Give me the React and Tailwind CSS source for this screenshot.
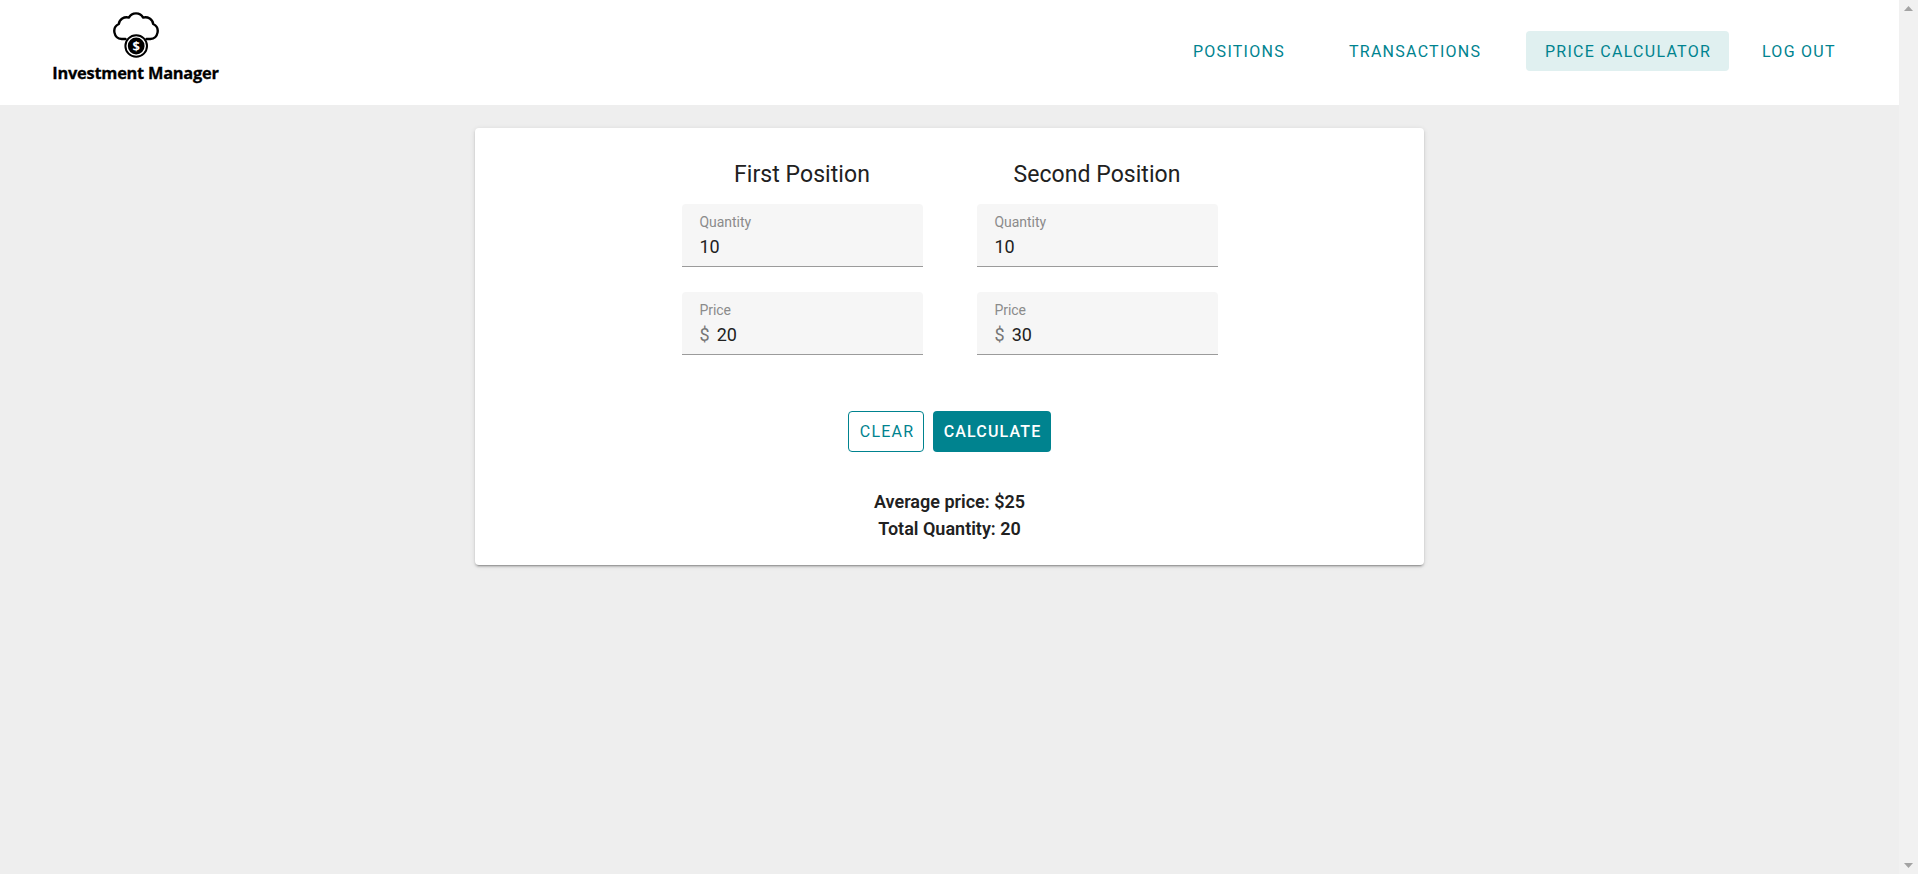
const navItems = [
  { label: "POSITIONS", cls: "ml-[1175px] w-[126px] pl-[18px]" },
  { label: "TRANSACTIONS", cls: "ml-[30px] w-[166px] pl-[18px]" },
  { label: "PRICE CALCULATOR", cls: "ml-[29px] w-[203px] bg-[#e0f0f0] pl-[19px]" },
  { label: "LOG OUT", cls: "ml-[15px] w-[110px] pl-[18px]" },
];

function Logo() {
  return (
    <div className="ml-[52px] flex w-[168px] flex-col items-center">
      <svg width="48" height="48" viewBox="0 0 48 48" fill="none">
        <path
          d="M13.5 28H9.7A7.9 7.9 0 0 1 6.8 13C7.4 8.2 12 5.4 17 6.6C19.6 1 28.4 1 31 6.6C36 5.4 40.6 8.2 41.2 13A7.9 7.9 0 0 1 38.3 28H34.5"
          stroke="#000"
          strokeWidth="2.4"
          strokeLinecap="round"
          strokeLinejoin="round"
        />
        <circle cx="24.2" cy="35" r="10.8" stroke="#000" strokeWidth="2" fill="#fff" />
        <circle cx="24.2" cy="35" r="8.4" fill="#000" />
        <text x="24.2" y="39.5" textAnchor="middle" fill="#fff" fontSize="13" fontWeight="700" fontFamily="Open Sans, sans-serif">$</text>
      </svg>
      <span className="mt-[2px] mr-[1px] font-['Open_Sans',sans-serif] text-[16.4px] leading-[24px] font-bold tracking-[-0.25px] whitespace-nowrap text-black [-webkit-text-stroke:0.3px_#000]">
        Investment Manager
      </span>
    </div>
  );
}

function Field({ label, value, prefix }) {
  return (
    <div className="flex h-[63px] w-[241px] flex-col rounded-t-[4px] border-b border-[#9b9b9b] bg-[#f6f6f6] pt-[9px] pl-[18px]">
      <span className="h-[20px] text-[14px] leading-[18px] tracking-[-0.05px] text-[#8b8b8b]">{label}</span>
      <div className="flex h-[28px] items-center gap-[7px] text-[18px] leading-[28px] text-[#212121]">
        {prefix && <span className="text-[#777]">{prefix}</span>}
        <span>{value}</span>
      </div>
    </div>
  );
}

function Position({ title, price }) {
  return (
    <section className="flex w-[241px] flex-col">
      <h2 className="mb-[12px] h-[34px] text-center text-[23px] leading-[34px] tracking-[0.05px] whitespace-nowrap text-[#212121]">
        {title}
      </h2>
      <Field label="Quantity" value="10" />
      <div className="h-[25px]" />
      <Field label="Price" value={price} prefix="$" />
    </section>
  );
}

export default function App() {
  return (
    <div className="flex h-[874px] w-[1918px] overflow-hidden bg-[#eeeeee] font-['Roboto',sans-serif]">
      <div className="flex w-[1899px] flex-col">
        <header className="flex h-[105px] bg-white">
          <div className="w-0 pt-[11px]">
            <Logo />
          </div>
          <nav className="flex pt-[31px]">
            {navItems.map((item) => (
              <a
                key={item.label}
                className={`${item.cls} block h-[40px] shrink-0 rounded-[4px] text-[16px] leading-[41px] tracking-[1.26px] whitespace-nowrap text-[#00838f]`}
              >
                {item.label}
              </a>
            ))}
          </nav>
        </header>
        <main className="mx-auto mt-[23px] flex h-[437px] w-[949px] flex-col items-center rounded-[4px] bg-white pt-[30px] shadow-[0_3px_1px_-2px_rgba(0,0,0,0.2),0_2px_2px_0_rgba(0,0,0,0.14),0_1px_5px_0_rgba(0,0,0,0.12)]">
          <div className="flex gap-[54px]">
            <Position title="First Position" price="20" />
            <Position title="Second Position" price="30" />
          </div>
          <div className="mt-[56px] flex gap-[9px]">
            <button className="h-[41px] w-[76px] rounded-[4px] border border-[#00838f] pl-[2px] text-[16px] leading-[39px] tracking-[1.2px] text-[#00838f]">CLEAR</button>
            <button className="h-[41px] w-[118px] rounded-[4px] bg-[#00838f] pl-[1px] text-[16px] leading-[41px] font-medium tracking-[1.15px] text-white">CALCULATE</button>
          </div>
          <div className="mt-[36px] text-center text-[18px] leading-[27px] font-semibold text-[#212121]">
            <p>Average price: $25</p>
            <p>Total Quantity: 20</p>
          </div>
        </main>
      </div>
      <div className="flex w-[19px] flex-col items-center justify-between bg-[#f1f1f1] py-[6px]">
        <svg width="9" height="5" viewBox="0 0 9 5"><path d="M0 5L4.5 0L9 5Z" fill="#a3a3a3" /></svg>
        <svg width="9" height="5" viewBox="0 0 9 5"><path d="M0 0L4.5 5L9 0Z" fill="#a3a3a3" /></svg>
      </div>
    </div>
  );
}
